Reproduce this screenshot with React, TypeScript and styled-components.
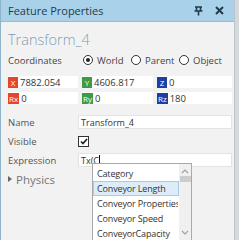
import { FC } from 'react';
import styled, { createGlobalStyle } from 'styled-components';

const GlobalStyle = createGlobalStyle`
    html, body {
        margin: 0;
        padding: 0;
        background: #d6d9db;
        font-family: 'Open Sans', 'Noto Sans', sans-serif;
    }
`;

const Panel = styled.div`
    position: relative;
    width: 233px;
    height: 240px;
    background: #f2f2f2;
    border-left: 1px solid #8fb3c9;
    border-right: 1px solid #b9c4cb;
    overflow: hidden;
`;

const TitleBar = styled.div`
    height: 21px;
    display: flex;
    align-items: center;
    padding: 0 10px 0 7px;
    background: #a9d2ea;
    border-bottom: 1px solid #93bdd6;
    color: #1f3b4d;
    font-size: 11px;
`;

const Title = styled.span`
    flex: 1;
`;

const TitleIcons = styled.div`
    display: flex;
    align-items: center;
    gap: 12px;
`;

const Content = styled.div`
    padding: 0 2px 0 7px;
`;

const Heading = styled.div`
    margin-top: 8px;
    height: 20px;
    font-size: 14.5px;
    font-weight: 300;
    color: #7f9db6;
    line-height: 20px;
`;

const CoordsRow = styled.div`
    margin-top: 3px;
    display: grid;
    grid-template-columns: 75px 48px 48px 1fr;
    align-items: center;
    height: 14px;
    font-size: 9.5px;
    color: #444;
`;

const Radio = styled.label`
    display: flex;
    align-items: center;
    gap: 4px;
`;

const RadioCircle = styled.span<{ $checked?: boolean }>`
    width: 8px;
    height: 8px;
    border: 1px solid #333;
    border-radius: 50%;
    display: inline-flex;
    align-items: center;
    justify-content: center;
    background: #fff;

    &::after {
        content: '';
        display: ${({ $checked }) => ($checked ? 'block' : 'none')};
        width: 4px;
        height: 4px;
        border-radius: 50%;
        background: #222;
    }
`;

const CoordGrid = styled.div`
    margin-top: 9px;
    display: grid;
    grid-template-columns: 70px 71px 75px;
    grid-auto-rows: 12px;
    column-gap: 4px;
    row-gap: 4px;
`;

const CoordField = styled.div`
    display: flex;
    align-items: center;
    background: #fff;
    font-size: 9.5px;
    color: #333;
`;

const Badge = styled.span<{ $color: string }>`
    display: inline-flex;
    align-items: center;
    justify-content: center;
    min-width: 8px;
    padding: 0 1px;
    height: 11px;
    margin-right: 2px;
    background: ${({ $color }) => $color};
    color: #fff;
    font-size: 8px;
`;

const Form = styled.div`
    margin-top: 11px;
    display: grid;
    grid-template-columns: 70px 1fr;
    grid-auto-rows: 14px;
    row-gap: 5px;
    align-items: center;
    font-size: 9.5px;
    color: #555;
`;

const Input = styled.div`
    box-sizing: border-box;
    height: 14px;
    background: #fff;
    border: 1px solid #e4e4e4;
    padding-left: 2px;
    font-size: 9px;
    color: #333;
    display: flex;
    align-items: center;
`;

const Caret = styled.span`
    display: inline-block;
    width: 1px;
    height: 10px;
    background: #111;
`;

const CheckBox = styled.span`
    width: 9px;
    height: 9px;
    border: 1px solid #333;
    background: #fff;
    display: flex;
    align-items: center;
    justify-content: center;
`;

const Section = styled.div`
    margin-top: 4px;
    height: 16px;
    display: flex;
    align-items: center;
    gap: 4px;
    font-size: 11.5px;
    color: #777;
`;

const Dropdown = styled.div`
    position: absolute;
    left: 91px;
    top: 163px;
    width: 98px;
    height: 80px;
    background: #fff;
    border: 1px solid #a9a9a9;
    display: flex;
`;

const List = styled.div`
    flex: 1;
    padding-top: 2px;
    min-width: 0;
`;

const Item = styled.div<{ $active?: boolean }>`
    box-sizing: border-box;
    height: 15px;
    line-height: 13px;
    padding-left: 3px;
    font-size: 9px;
    letter-spacing: -0.15px;
    color: #333;
    background: ${({ $active }) => ($active ? '#dcecf8' : 'transparent')};
    border: 1px solid ${({ $active }) => ($active ? '#a6cbe6' : 'transparent')};
    white-space: nowrap;
    overflow: hidden;
`;

const ScrollBar = styled.div`
    width: 12px;
    background: #f0f0f0;
    display: flex;
    flex-direction: column;
    align-items: center;
    padding: 5px 0 9px;
`;

const Thumb = styled.div`
    width: 11px;
    height: 6px;
    margin-top: 2px;
    background: #cdcdcd;
`;

const Spacer = styled.div`
    flex: 1;
`;

const Arrow: FC<{ $down?: boolean }> = ({ $down }) => (
    <svg width="8" height="5" viewBox="0 0 8 5">
        <path
            d={$down ? 'M1 1 L4 4 L7 1' : 'M1 4 L4 1 L7 4'}
            fill="none"
            stroke="#a0a0a0"
            strokeWidth="1.1"
        />
    </svg>
);

const coords = [
    { badge: 'X', color: '#e5452b', value: '7882.054' },
    { badge: 'Y', color: '#3c9b44', value: '4606.817' },
    { badge: 'Z', color: '#1b3fa6', value: '0' },
    { badge: 'Rx', color: '#e5452b', value: '0' },
    { badge: 'Ry', color: '#3c9b44', value: '0' },
    { badge: 'Rz', color: '#1b3fa6', value: '180' },
];

const items = ['Category', 'Conveyor Length', 'Conveyor Properties', 'Conveyor Speed', 'ConveyorCapacity'];

const App: FC = () => (
    <>
        <GlobalStyle />
        <Panel>
            <TitleBar>
                <Title>Feature Properties</Title>
                <TitleIcons>
                    <svg width="9" height="10" viewBox="0 0 9 10">
                        <path d="M1 1 H8 M2.5 1 V5 M6.5 1 V5 M0.5 5 H8.5 M4.5 5 V9.5" stroke="#1f3b4d" strokeWidth="1.6" fill="none" />
                    </svg>
                    <svg width="9" height="9" viewBox="0 0 9 9">
                        <path d="M1 1 L8 8 M8 1 L1 8" stroke="#1f3b4d" strokeWidth="2" />
                    </svg>
                </TitleIcons>
            </TitleBar>
            <Content>
                <Heading>Transform_4</Heading>
                <CoordsRow>
                    <span>Coordinates</span>
                    <Radio>
                        <RadioCircle $checked />
                        World
                    </Radio>
                    <Radio>
                        <RadioCircle />
                        Parent
                    </Radio>
                    <Radio>
                        <RadioCircle />
                        Object
                    </Radio>
                </CoordsRow>
                <CoordGrid>
                    {coords.map((c) => (
                        <CoordField key={c.badge}>
                            <Badge $color={c.color}>{c.badge}</Badge>
                            {c.value}
                        </CoordField>
                    ))}
                </CoordGrid>
                <Form>
                    <span>Name</span>
                    <Input>Transform_4</Input>
                    <span>Visible</span>
                    <div>
                        <CheckBox>
                            <svg width="8" height="7" viewBox="0 0 8 7">
                                <path d="M1 3.5 L3 5.5 L7 1" stroke="#222" strokeWidth="1.7" fill="none" />
                            </svg>
                        </CheckBox>
                    </div>
                    <span>Expression</span>
                    <Input>
                        Tx(C<Caret />
                    </Input>
                </Form>
                <Section>
                    <svg width="4" height="6" viewBox="0 0 4 6">
                        <path d="M0 0 L4 3 L0 6 Z" fill="#666" />
                    </svg>
                    Physics
                </Section>
            </Content>
            <Dropdown>
                <List>
                    {items.map((it, i) => (
                        <Item key={it} $active={i === 1}>
                            {it}
                        </Item>
                    ))}
                </List>
                <ScrollBar>
                    <Arrow />
                    <Thumb />
                    <Spacer />
                    <Arrow $down />
                </ScrollBar>
            </Dropdown>
        </Panel>
    </>
);

export default App;
